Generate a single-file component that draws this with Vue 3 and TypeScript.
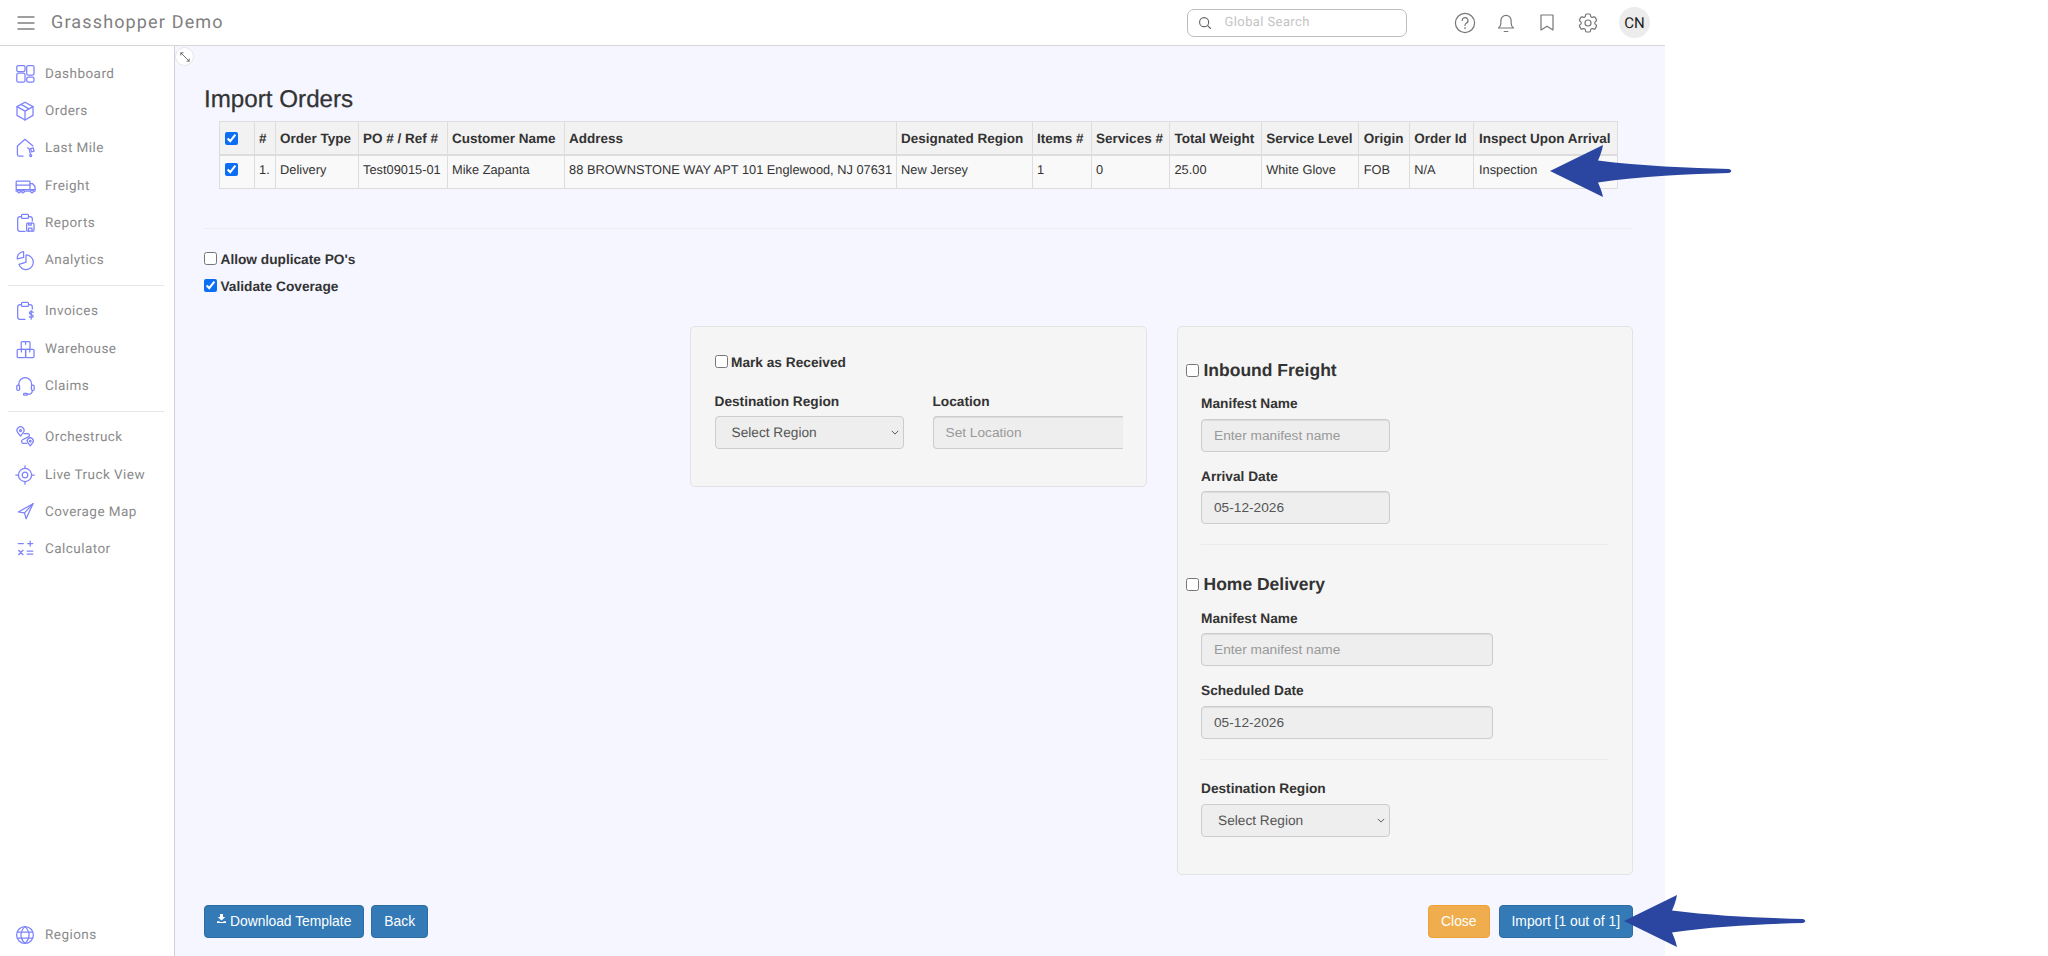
<template>
  <div class="app">
    <header class="topbar">
      <svg class="burger" viewBox="0 0 18 14" width="18" height="14">
        <path d="M0.5 1h17M0.5 7h17M0.5 13h17" />
      </svg>
      <span class="brand">Grasshopper Demo</span>
      <div class="search">
        <svg viewBox="0 0 16 16" width="14" height="14">
          <circle cx="7" cy="7" r="5.2" />
          <path d="M11 11l3.6 3.6" />
        </svg>
        <span>Global Search</span>
      </div>
      <div class="tools">
        <svg v-for="(icon, i) in toolIcons" :key="i" viewBox="0 0 24 24" width="24" height="24">
          <path v-for="d in icon" :key="d" :d="d" />
        </svg>
        <div class="avatar">CN</div>
      </div>
    </header>

    <div class="body">
      <aside class="sidebar">
        <template v-for="(group, g) in navGroups" :key="g">
          <div v-if="g > 0" class="divider" />
          <a v-for="item in group" :key="item.label" class="nav-item">
            <svg viewBox="0 0 24 24" width="24" height="24">
              <path v-for="d in item.icon" :key="d" :d="d" />
            </svg>
            <span>{{ item.label }}</span>
          </a>
        </template>
        <a class="nav-item bottom">
          <svg viewBox="0 0 24 24" width="24" height="24">
            <path v-for="d in globeIcon" :key="d" :d="d" />
          </svg>
          <span>Regions</span>
        </a>
      </aside>

      <main class="content">
        <button class="expand">
          <svg viewBox="0 0 20 20" width="12" height="12">
            <path d="M3 3l14 14M3 3h4.5M3 3v4.5M17 17h-4.5M17 17v-4.5" />
          </svg>
        </button>

        <h1>Import Orders</h1>

        <table class="orders">
          <colgroup>
            <col v-for="(w, i) in colWidths" :key="i" :style="{ width: w + 'px' }" />
          </colgroup>
          <thead>
            <tr>
              <th><input type="checkbox" checked /></th>
              <th v-for="h in headers" :key="h">{{ h }}</th>
            </tr>
          </thead>
          <tbody>
            <tr>
              <td><input type="checkbox" checked /></td>
              <td v-for="(c, i) in row" :key="i">{{ c }}</td>
            </tr>
          </tbody>
        </table>

        <div class="rule" />

        <label class="check"><input type="checkbox" />Allow duplicate PO's</label>
        <label class="check second"><input type="checkbox" checked />Validate Coverage</label>

        <div class="panels">
          <section class="panel receive">
            <label class="check"><input type="checkbox" />Mark as Received</label>
            <div class="receive-fields">
              <div>
                <label class="field-label">Destination Region</label>
                <div class="select-box">
                  <span>Select Region</span>
                  <svg viewBox="0 0 10 6" width="8" height="5"><path d="M1 1l4 4 4-4" /></svg>
                </div>
              </div>
              <div>
                <label class="field-label">Location</label>
                <input class="text-input location" placeholder="Set Location" readonly />
              </div>
            </div>
          </section>

          <section class="panel shipping">
            <label class="heading"><input type="checkbox" />Inbound Freight</label>
            <div class="fields">
              <label class="field-label">Manifest Name</label>
              <input class="text-input short" placeholder="Enter manifest name" readonly />
              <label class="field-label gap">Arrival Date</label>
              <input class="text-input short" value="05-12-2026" readonly />
              <div class="panel-rule" />
            </div>

            <label class="heading home"><input type="checkbox" />Home Delivery</label>
            <div class="fields">
              <label class="field-label">Manifest Name</label>
              <input class="text-input long" placeholder="Enter manifest name" readonly />
              <label class="field-label gap">Scheduled Date</label>
              <input class="text-input long" value="05-12-2026" readonly />
              <div class="panel-rule" />
              <label class="field-label region">Destination Region</label>
              <div class="select-box short">
                <span>Select Region</span>
                <svg viewBox="0 0 10 6" width="8" height="5"><path d="M1 1l4 4 4-4" /></svg>
              </div>
            </div>
          </section>
        </div>

        <footer class="actions">
          <button class="btn primary">
            <svg viewBox="0 0 12 12" width="9" height="9">
              <path d="M4 0h4v4h3L6 8.5 1 4h3zM0 9.5h3L4 10.5h4l1-1h3V12H0z" />
            </svg>
            Download Template
          </button>
          <button class="btn primary back">Back</button>
          <button class="btn warning push">Close</button>
          <button class="btn primary import">Import [1 out of 1]</button>
        </footer>
      </main>
    </div>

    <!-- annotation arrows drawn over the screenshot -->
    <svg class="arrow arrow-table" viewBox="0 0 182 52" width="182" height="52">
      <path :d="arrowPath" />
    </svg>
    <svg class="arrow arrow-import" viewBox="0 0 182 52" width="182" height="52">
      <path :d="arrowPath" />
    </svg>
  </div>
</template>

<script setup lang="ts">
type NavItem = { label: string; icon: string[] };

const arrowPath =
  'M0 26L53 0C52 6 50 11 48 15.5C90 21 140 23 179 24C182 25 182 27 179 28C140 29 90 31 48 37.5C50 42 52 47 53 52Z';

const roundRect = (x: number, y: number, w: number, h: number, r: number) =>
  `M${x + r} ${y}h${w - 2 * r}a${r} ${r} 0 0 1 ${r} ${r}v${h - 2 * r}a${r} ${r} 0 0 1 ${-r} ${r}h${2 * r - w}a${r} ${r} 0 0 1 ${-r} ${-r}v${2 * r - h}a${r} ${r} 0 0 1 ${r} ${-r}z`;

const circle = (cx: number, cy: number, r: number) =>
  `M${cx - r} ${cy}a${r} ${r} 0 1 1 ${2 * r} 0a${r} ${r} 0 1 1 ${-2 * r} 0z`;

const clipboard = [
  'M8.5 5.5H7A2.3 2.3 0 0 0 4.7 7.8V18A2.3 2.3 0 0 0 7 20.3h5',
  'M15.5 5.5H17a2.3 2.3 0 0 1 2.3 2.3V10',
  roundRect(8.5, 3.4, 7, 4, 1),
];

const navGroups: NavItem[][] = [
  [
    {
      label: 'Dashboard',
      icon: [
        roundRect(3.8, 3.5, 8.2, 6, 1.6),
        roundRect(3.8, 11.2, 8.2, 9, 1.6),
        roundRect(13.7, 3.5, 7.3, 9.6, 1.6),
        roundRect(13.7, 15.2, 7.3, 5, 1.6),
      ],
    },
    {
      label: 'Orders',
      icon: [
        'M12 3.2l8 4.4v8.8l-8 4.6-8-4.6V7.6z',
        'M4 7.6l8 4.5 8-4.5M12 12.1v8.9M8 5.4l8 4.5',
      ],
    },
    {
      label: 'Last Mile',
      icon: [
        'M10 20.2H6.2a1.8 1.8 0 0 1-1.8-1.8V10L12 3.3l8 6.6',
        'M14.5 11.8l1.6.8 1.4 6',
        'M17.6 12.6l2.6-.7.9 3.3-2.6.7z',
        circle(17.7, 19.6, 1),
      ],
    },
    {
      label: 'Freight',
      icon: [
        roundRect(3.2, 7, 13.8, 8.6, 0.8),
        'M3.2 11.2H17M17 9.5h2.4l2.6 3v3.1h-5',
        'M3.2 15.6v1.6h1.4M7.4 17.2h1.4M11.4 17.2h5.8M20.6 17.2H22v-1.6',
        circle(6, 17.5, 1.3),
        circle(10, 17.5, 1.3),
        circle(19, 17.5, 1.3),
      ],
    },
    {
      label: 'Reports',
      icon: [
        ...clipboard,
        roundRect(13.6, 12.2, 7.4, 8, 1),
        'M15.6 20.2v-3h3.4v3M15.6 12.2v2h2.6v-2',
      ],
    },
    {
      label: 'Analytics',
      icon: [
        'M13 7a7.3 7.3 0 1 1-7 9.3l7-2.2z',
        'M10.6 3.6a6.6 6.6 0 0 0-6.3 7.3l6.3-1.6z',
      ],
    },
  ],
  [
    {
      label: 'Invoices',
      icon: [
        ...clipboard,
        'M20.2 13.4c-.7-1-3.8-1.1-3.8.7s3.8 1.2 3.8 3-3.2 1.7-4 .6M18.2 11.6v8.6',
      ],
    },
    {
      label: 'Warehouse',
      icon: [
        roundRect(8.2, 4.7, 8.8, 7.6, 1),
        roundRect(4.2, 12.3, 8.4, 8.2, 1),
        roundRect(12.6, 12.3, 8.4, 8.2, 1),
        'M12.6 4.7v2.6M8.4 12.3v2.6M16.8 12.3v2.6',
      ],
    },
    {
      label: 'Claims',
      icon: [
        'M5.8 11.5V10a6.4 6.4 0 0 1 12.8 0v1.5',
        roundRect(3.8, 11, 2.8, 5.4, 1.2),
        roundRect(18.4, 11, 2.8, 5.4, 1.2),
        'M19.4 16.4c0 2.4-2 3.8-5 3.9',
        roundRect(10.6, 19.4, 3.8, 1.8, 0.8),
      ],
    },
  ],
  [
    {
      label: 'Orchestruck',
      icon: [
        'M7.5 11.2L4.8 7.6a3.5 3.5 0 1 1 5.4 0z',
        circle(7.5, 5.6, 1),
        'M17.3 20.8l-2.3-3a3 3 0 1 1 4.6 0z',
        circle(17.3, 16.2, 0.8),
        'M11 8.6h3.6a1.7 1.7 0 0 1 .7 3.3L9.6 14.8a1.9 1.9 0 0 0 .9 3.6h3',
      ],
    },
    {
      label: 'Live Truck View',
      icon: [
        circle(12, 12, 6.6),
        circle(12, 12, 2.8),
        'M12 2.8v2.6M12 18.6v2.6M2.8 12h2.6M18.6 12h2.6',
      ],
    },
    {
      label: 'Coverage Map',
      icon: ['M20 3.7L5.3 12l6.2.9 1.6 5.9z', 'M20 3.7l-8.5 9.2'],
    },
    {
      label: 'Calculator',
      icon: [
        'M5.3 6.6h5M14.7 6.6h5M17.2 4.1v5',
        'M5.6 13.3l4.4 4.4M10 13.3l-4.4 4.4',
        'M14.2 14h5.6M14.2 17.2h5.6',
      ],
    },
  ],
];

const globeIcon = [
  circle(12, 12, 8.4),
  'M12 3.6c-5.4 5-5.4 11.8 0 16.8M12 3.6c5.4 5 5.4 11.8 0 16.8',
  'M4.3 9h15.4M4.3 15h15.4',
];

const toolIcons: string[][] = [
  [
    circle(12, 12, 9.6),
    'M9.2 9.6a2.9 2.9 0 1 1 4.3 2.5c-1 .6-1.5 1.2-1.5 2.4',
    'M12 16.6v1',
  ],
  [
    'M4.5 17c1.3-1 2.4-2.4 2.4-5V9.5a5.1 5.1 0 0 1 10.2 0V12c0 2.6 1.1 4 2.4 5z',
    'M10.2 20.5h3.6',
  ],
  ['M6 4h12v15l-6-3.8L6 19z'],
  [
    'M9.594 3.94c.09-.542.56-.94 1.11-.94h2.593c.55 0 1.02.398 1.11.94l.213 1.281c.063.374.313.686.645.87.074.04.147.083.22.127.325.196.72.257 1.075.124l1.217-.456a1.125 1.125 0 0 1 1.37.49l1.296 2.247a1.125 1.125 0 0 1-.26 1.431l-1.003.827c-.293.241-.438.613-.43.992a7.723 7.723 0 0 1 0 .255c-.008.378.137.75.43.991l1.004.827c.424.35.534.955.26 1.43l-1.298 2.247a1.125 1.125 0 0 1-1.369.491l-1.217-.456c-.355-.133-.75-.072-1.076.124a6.47 6.47 0 0 1-.22.128c-.331.183-.581.495-.644.869l-.213 1.281c-.09.543-.56.94-1.11.94h-2.594c-.55 0-1.019-.398-1.11-.94l-.213-1.281c-.062-.374-.312-.686-.644-.87a6.52 6.52 0 0 1-.22-.127c-.325-.196-.72-.257-1.076-.124l-1.217.456a1.125 1.125 0 0 1-1.369-.49l-1.297-2.247a1.125 1.125 0 0 1 .26-1.431l1.004-.827c.292-.24.437-.613.43-.991a6.932 6.932 0 0 1 0-.255c.007-.38-.138-.751-.43-.992l-1.004-.827a1.125 1.125 0 0 1-.26-1.43l1.297-2.247a1.125 1.125 0 0 1 1.37-.491l1.216.456c.356.133.751.072 1.076-.124.072-.044.146-.086.22-.128.332-.183.582-.495.644-.869l.214-1.28z',
    circle(12, 12, 3),
  ],
];

const colWidths = [34.6, 21, 83, 89, 117, 332, 136, 59, 78.4, 91.7, 97.6, 50.5, 64.7, 144];

const headers = [
  '#',
  'Order Type',
  'PO # / Ref #',
  'Customer Name',
  'Address',
  'Designated Region',
  'Items #',
  'Services #',
  'Total Weight',
  'Service Level',
  'Origin',
  'Order Id',
  'Inspect Upon Arrival',
];

const row = [
  '1.',
  'Delivery',
  'Test09015-01',
  'Mike Zapanta',
  '88 BROWNSTONE WAY APT 101 Englewood, NJ 07631',
  'New Jersey',
  '1',
  '0',
  '25.00',
  'White Glove',
  'FOB',
  'N/A',
  'Inspection',
];
</script>

<style>
html,
body {
  margin: 0;
  background: #fff;
}
</style>

<style scoped>
.app {
  position: relative;
  width: 1665px;
  height: 956px;
  overflow: visible;
  display: flex;
  flex-direction: column;
  font-family: 'Liberation Sans', Arial, sans-serif;
  font-size: 13.7px;
  color: #333;
  text-rendering: geometricPrecision;
}

.topbar {
  display: flex;
  align-items: center;
  height: 45px;
  padding: 0 15px 0 17px;
  border-bottom: 1px solid #d6d6d6;
  background: #fff;
  flex-shrink: 0;
}

.burger {
  fill: none;
  stroke: #808080;
  stroke-width: 1.5;
}

.brand {
  margin-left: 16px;
  font-family: Roboto, sans-serif;
  font-size: 18px;
  letter-spacing: 1.15px;
  color: #808080;
}

.search {
  display: flex;
  align-items: center;
  gap: 13px;
  box-sizing: border-box;
  width: 220px;
  height: 28px;
  margin-left: auto;
  padding-left: 10px;
  border: 1px solid #bdbdbd;
  border-radius: 7px;
  font-family: Roboto, sans-serif;
  font-size: 13px;
  letter-spacing: 0.4px;
  color: #c4c4c4;
}

.search svg {
  fill: none;
  stroke: #666;
  stroke-width: 1.3;
}

.tools {
  display: flex;
  align-items: center;
  gap: 17px;
  margin-left: 46px;
}

.tools svg {
  fill: none;
  stroke: #777;
  stroke-width: 1.2;
  stroke-linecap: round;
  stroke-linejoin: round;
}

.avatar {
  display: flex;
  align-items: center;
  justify-content: center;
  width: 31px;
  height: 31px;
  margin-left: 2.5px;
  border-radius: 50%;
  background: #ececec;
  font-family: Roboto, sans-serif;
  font-size: 15px;
  color: #222;
}

.body {
  display: flex;
  flex: 1;
  min-height: 0;
}

.sidebar {
  display: flex;
  flex-direction: column;
  box-sizing: border-box;
  width: 175px;
  flex-shrink: 0;
  padding: 9.4px 0 2px;
  border-right: 1px solid #d0d0d8;
  background: #fff;
}

.nav-item {
  display: flex;
  align-items: center;
  gap: 8px;
  height: 37.2px;
  padding-left: 13px;
  font-family: Roboto, sans-serif;
  font-size: 13.5px;
  letter-spacing: 0.45px;
  color: #8a8a8a;
}

.nav-item svg {
  fill: none;
  stroke: #7c82fb;
  stroke-width: 1.25;
  stroke-linecap: round;
  stroke-linejoin: round;
}

.nav-item.bottom {
  margin-top: auto;
}

.divider {
  height: 1px;
  margin: 6.7px 10px 6.7px 8px;
  background: #e6e6e6;
}

.content {
  position: relative;
  flex: 1;
  min-width: 0;
  display: flex;
  flex-direction: column;
  align-items: flex-start;
  box-sizing: border-box;
  padding: 36px 32px 0 29px;
  background: #f5f6ff;
}

.expand {
  position: absolute;
  left: 0;
  top: 1px;
  display: flex;
  align-items: center;
  justify-content: center;
  width: 19px;
  height: 19px;
  padding: 0;
  border: 1px solid #e6e6e6;
  border-radius: 50%;
  background: #fff;
}

.expand svg {
  fill: none;
  stroke: #666;
  stroke-width: 1.5;
}

h1 {
  margin: 1.5px 0 5.5px;
  font-size: 24.2px;
  font-weight: 500;
  line-height: 32px;
  color: #333;
  -webkit-text-stroke: 0.25px #333;
}

.orders {
  margin-left: 15px;
  table-layout: fixed;
  width: 1399px;
  border-collapse: collapse;
  background: #f9f9f9;
}

.orders th,
.orders td {
  padding: 0 4.5px;
  border: 1px solid #ddd;
  text-align: left;
  white-space: nowrap;
  overflow: hidden;
}

.orders th {
  height: 31px;
  padding-top: 1px;
  background: #f2f2f2;
  border-bottom-width: 2px;
  font-size: 13.5px;
  font-weight: 700;
}

.orders td {
  height: 33px;
  padding-bottom: 4px;
  box-sizing: border-box;
  font-size: 12.8px;
}

.orders th input,
.orders td input {
  display: block;
  margin-top: -1px;
}

input[type='checkbox'] {
  width: 13px;
  height: 13px;
  margin: 0;
  accent-color: #0b6ef5;
}

.rule {
  align-self: stretch;
  height: 1px;
  margin: 39px 0 21px;
  background: #ecedf3;
}

.check {
  display: flex;
  align-items: center;
  gap: 3.5px;
  height: 19px;
  font-weight: 700;
}

.check input {
  margin-top: -2px;
}

.check.second {
  margin-top: 8px;
}

.panels {
  display: flex;
  justify-content: flex-end;
  gap: 30px;
  align-self: stretch;
  margin-top: 30px;
}

.panel {
  box-sizing: border-box;
  width: 456.5px;
  border: 1px solid #e3e3e3;
  border-radius: 5px;
  background: #f5f5f5;
}

.receive {
  height: 161.3px;
  padding: 26.5px 23.5px 0;
  align-self: flex-start;
}

.receive-fields {
  display: flex;
  gap: 29px;
  margin-top: 20.5px;
}

.field-label {
  display: block;
  margin-bottom: 5.7px;
  font-weight: 700;
  line-height: 18px;
}

.field-label.gap {
  margin-top: 15.7px;
}

.field-label.region {
  margin-top: 20.4px;
}

.select-box {
  position: relative;
  display: flex;
  align-items: center;
  justify-content: space-between;
  box-sizing: border-box;
  width: 189px;
  height: 33px;
  padding: 0 4px 0 16px;
  border: 1px solid #ccc;
  border-radius: 4px;
  background: #eee;
  color: #555;
}

.select-box svg {
  fill: none;
  stroke: #555;
  stroke-width: 1.2;
}

.text-input {
  display: block;
  box-sizing: border-box;
  height: 33px;
  padding: 0 12px;
  border: 1px solid #ccc;
  border-radius: 4px;
  outline: none;
  background: #eee;
  box-shadow: inset 0 1px 1px rgba(0, 0, 0, 0.075);
  font-family: inherit;
  font-size: 13.7px;
  color: #555;
}

.text-input::placeholder {
  color: #999;
  opacity: 1;
}

.text-input.location {
  width: 190px;
  border-right: none;
  border-radius: 4px 0 0 4px;
}

.text-input.short {
  width: 189px;
}

.text-input.long {
  width: 292px;
}

.shipping {
  height: 549px;
  padding-top: 33.5px;
}

.heading {
  display: flex;
  align-items: center;
  gap: 4.5px;
  height: 21px;
  padding-left: 8.5px;
  font-size: 17.5px;
  font-weight: 700;
}

.heading.home {
  margin-top: 29.2px;
}

.fields {
  margin-top: 14.2px;
  padding: 0 23px 0 23.5px;
}

.panel-rule {
  height: 1px;
  margin-top: 20px;
  background: #ebebeb;
}

.actions {
  display: flex;
  align-items: center;
  gap: 7px;
  align-self: stretch;
  margin-top: 30px;
}

.btn {
  display: flex;
  align-items: center;
  gap: 4px;
  box-sizing: border-box;
  height: 33px;
  padding: 0 12px;
  border: 1px solid transparent;
  border-radius: 4px;
  font-family: inherit;
  font-size: 13.85px;
  color: #fff;
}

.btn svg {
  fill: #fff;
  margin-top: -5px;
}

.primary {
  background: #337ab7;
  border-color: #2e6da4;
}

.warning {
  background: #f0ad4e;
  border-color: #eea236;
}

.push {
  margin-left: auto;
}

.import {
  margin-left: 2px;
}

/* annotation overlays */
.arrow {
  position: absolute;
  fill: #2a46a0;
}

.arrow-table {
  left: 1550px;
  top: 145px;
}

.arrow-import {
  left: 1624px;
  top: 895px;
}
</style>
